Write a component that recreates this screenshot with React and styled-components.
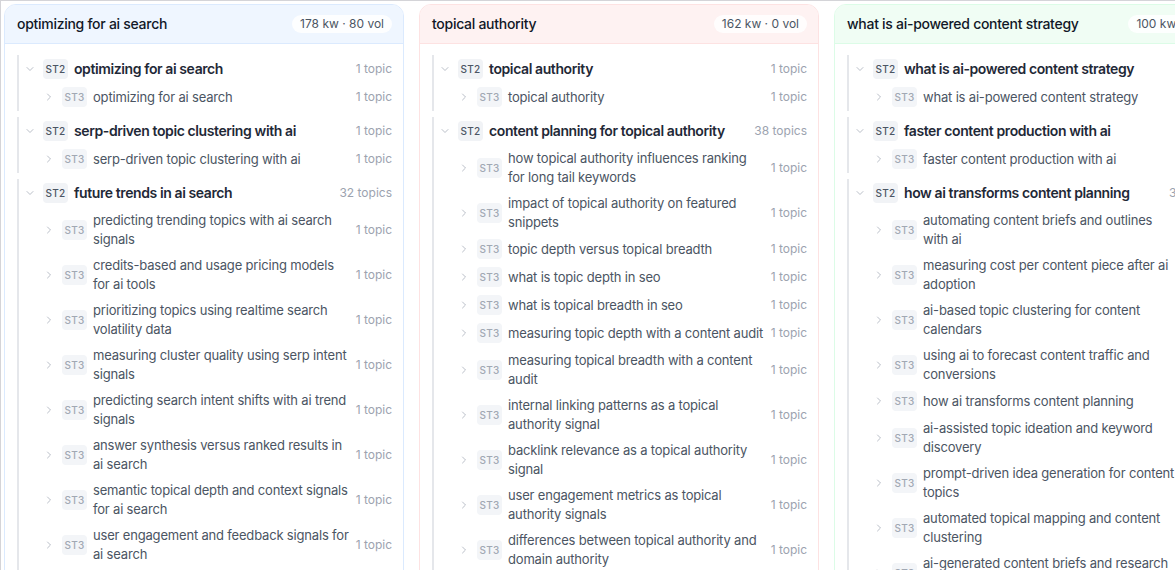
import styled, { createGlobalStyle } from "styled-components";
import { ChevronDown, ChevronRight } from "lucide-react";

const GlobalStyle = createGlobalStyle`
    * { box-sizing: border-box; }
    html, body { margin: 0; padding: 0; background: #fff; }
    body {
        font-family: Inter, "Noto Sans", "Liberation Sans", sans-serif;
        -webkit-font-smoothing: antialiased;
    }
`

const tones = {
    blue: { border: "#dbeafe", head: "#eff6ff" },
    red: { border: "#fde2e2", head: "#fef2f2" },
    green: { border: "#dcfce7", head: "#f0fdf4" },
}

const columns = [
    {
        tone: "blue",
        title: "optimizing for ai search",
        stats: "178 kw · 80 vol",
        groups: [
            { title: "optimizing for ai search", count: "1 topic", items: ["optimizing for ai search"] },
            { title: "serp-driven topic clustering with ai", count: "1 topic", items: ["serp-driven topic clustering with ai"] },
            {
                title: "future trends in ai search",
                count: "32 topics",
                items: [
                    "predicting trending topics with ai search signals",
                    "credits-based and usage pricing models for ai tools",
                    "prioritizing topics using realtime search volatility data",
                    "measuring cluster quality using serp intent signals",
                    "predicting search intent shifts with ai trend signals",
                    "answer synthesis versus ranked results in ai search",
                    "semantic topical depth and context signals for ai search",
                    "user engagement and feedback signals for ai search",
                    "ranking factors for generative ai search results",
                ],
            },
        ],
    },
    {
        tone: "red",
        title: "topical authority",
        stats: "162 kw · 0 vol",
        groups: [
            { title: "topical authority", count: "1 topic", items: ["topical authority"] },
            {
                title: "content planning for topical authority",
                count: "38 topics",
                items: [
                    "how topical authority influences ranking for long tail keywords",
                    "impact of topical authority on featured snippets",
                    "topic depth versus topical breadth",
                    "what is topic depth in seo",
                    "what is topical breadth in seo",
                    "measuring topic depth with a content audit",
                    "measuring topical breadth with a content audit",
                    "internal linking patterns as a topical authority signal",
                    "backlink relevance as a topical authority signal",
                    "user engagement metrics as topical authority signals",
                    "differences between topical authority and domain authority",
                    "building topical authority for a new website",
                ],
            },
        ],
    },
    {
        tone: "green",
        title: "what is ai-powered content strategy",
        stats: "100 kw · 0 vol",
        groups: [
            { title: "what is ai-powered content strategy", count: "1 topic", items: ["what is ai-powered content strategy"] },
            { title: "faster content production with ai", count: "1 topic", items: ["faster content production with ai"] },
            {
                title: "how ai transforms content planning",
                count: "34 topics",
                items: [
                    "automating content briefs and outlines with ai",
                    "measuring cost per content piece after ai adoption",
                    "ai-based topic clustering for content calendars",
                    "using ai to forecast content traffic and conversions",
                    "how ai transforms content planning",
                    "ai-assisted topic ideation and keyword discovery",
                    "prompt-driven idea generation for content topics",
                    "automated topical mapping and content clustering",
                    "ai-generated content briefs and research summaries",
                ],
            },
        ],
    },
]

function App() {
    return (
        <>
            <GlobalStyle />
            <Board>
                {columns.map((col) => (
                    <Card key={col.title} $tone={col.tone}>
                        <CardHead $tone={col.tone}>
                            <HeadTitle>{col.title}</HeadTitle>
                            <Stats>{col.stats}</Stats>
                        </CardHead>
                        <CardBody>
                            {col.groups.map((g) => (
                                <Group key={g.title}>
                                    <GroupRow>
                                        <Chevron><ChevronDown size={12} strokeWidth={1.5} /></Chevron>
                                        <Tag $level={2}>ST2</Tag>
                                        <GroupTitle>{g.title}</GroupTitle>
                                        <Count>{g.count}</Count>
                                    </GroupRow>
                                    {g.items.map((item) => (
                                        <ItemRow key={item}>
                                            <Chevron><ChevronRight size={12} strokeWidth={1.5} /></Chevron>
                                            <Tag $level={3}>ST3</Tag>
                                            <ItemText>{item}</ItemText>
                                            <Count>1 topic</Count>
                                        </ItemRow>
                                    ))}
                                </Group>
                            ))}
                        </CardBody>
                    </Card>
                ))}
            </Board>
        </>
    )
}

export default App

const Board = styled.div`
    display: flex;
    align-items: flex-start;
    gap: 15px;
    height: 100vh;
    overflow: hidden;
    padding: 3px 0 0 3px;
    border-top: 1px solid #d4d4d8;
    border-left: 1px solid #d4d4d8;
`
const Card = styled.section`
    flex: 0 0 400px;
    width: 400px;
    background: #fff;
    border: 1px solid ${(p) => tones[p.$tone].border};
    border-radius: 12px;
    overflow: hidden;
`
const CardHead = styled.header`
    display: flex;
    align-items: center;
    justify-content: space-between;
    height: 39px;
    padding: 0 11px 0 12px;
    background: ${(p) => tones[p.$tone].head};
    border-bottom: 1px solid ${(p) => tones[p.$tone].border};
`
const HeadTitle = styled.h2`
    margin: 0;
    font-size: 14px;
    line-height: 20px;
    font-weight: 500;
    letter-spacing: -0.28px;
    color: #111827;
    white-space: nowrap;
`
const Stats = styled.span`
    flex-shrink: 0;
    padding: 1px 8px;
    border-radius: 999px;
    background: rgba(255, 255, 255, 0.85);
    font-size: 12px;
    line-height: 16px;
    color: #4b5563;
    white-space: nowrap;
`
const CardBody = styled.div`
    display: flex;
    flex-direction: column;
    gap: 6px;
    padding: 11px 11px 12px 12px;
`
const Group = styled.div`
    display: flex;
    flex-direction: column;
    border-left: 2px solid #e5e7eb;
`
const GroupRow = styled.div`
    display: flex;
    align-items: center;
    gap: 6px;
    min-height: 28px;
    padding: 4px 0 4px 4px;
`
const ItemRow = styled(GroupRow)`
    padding-left: 23px;
`
const Chevron = styled.span`
    display: flex;
    align-items: center;
    justify-content: center;
    flex: 0 0 14px;
    width: 14px;
    height: 14px;
    color: #a3aab5;
`
const Tag = styled.span`
    flex-shrink: 0;
    width: 25px;
    height: 20px;
    border-radius: 4px;
    display: flex;
    align-items: center;
    justify-content: center;
    font-size: 10px;
    font-weight: 500;
    letter-spacing: 0.2px;
    background: ${(p) => (p.$level === 2 ? "#f1f3f6" : "#f3f5f8")};
    color: ${(p) => (p.$level === 2 ? "#4b5563" : "#a1a8b3")};
`
const GroupTitle = styled.span`
    flex: 1;
    min-width: 0;
    font-size: 14px;
    line-height: 20px;
    font-weight: 600;
    letter-spacing: -0.4px;
    color: #1f2937;
    white-space: nowrap;
`
const ItemText = styled.span`
    flex: 1;
    min-width: 0;
    font-size: 13px;
    line-height: 18.5px;
    letter-spacing: -0.18px;
    color: #4b5563;
`
const Count = styled.span`
    flex-shrink: 0;
    font-size: 12px;
    line-height: 16px;
    color: #9ca3af;
    white-space: nowrap;
`
